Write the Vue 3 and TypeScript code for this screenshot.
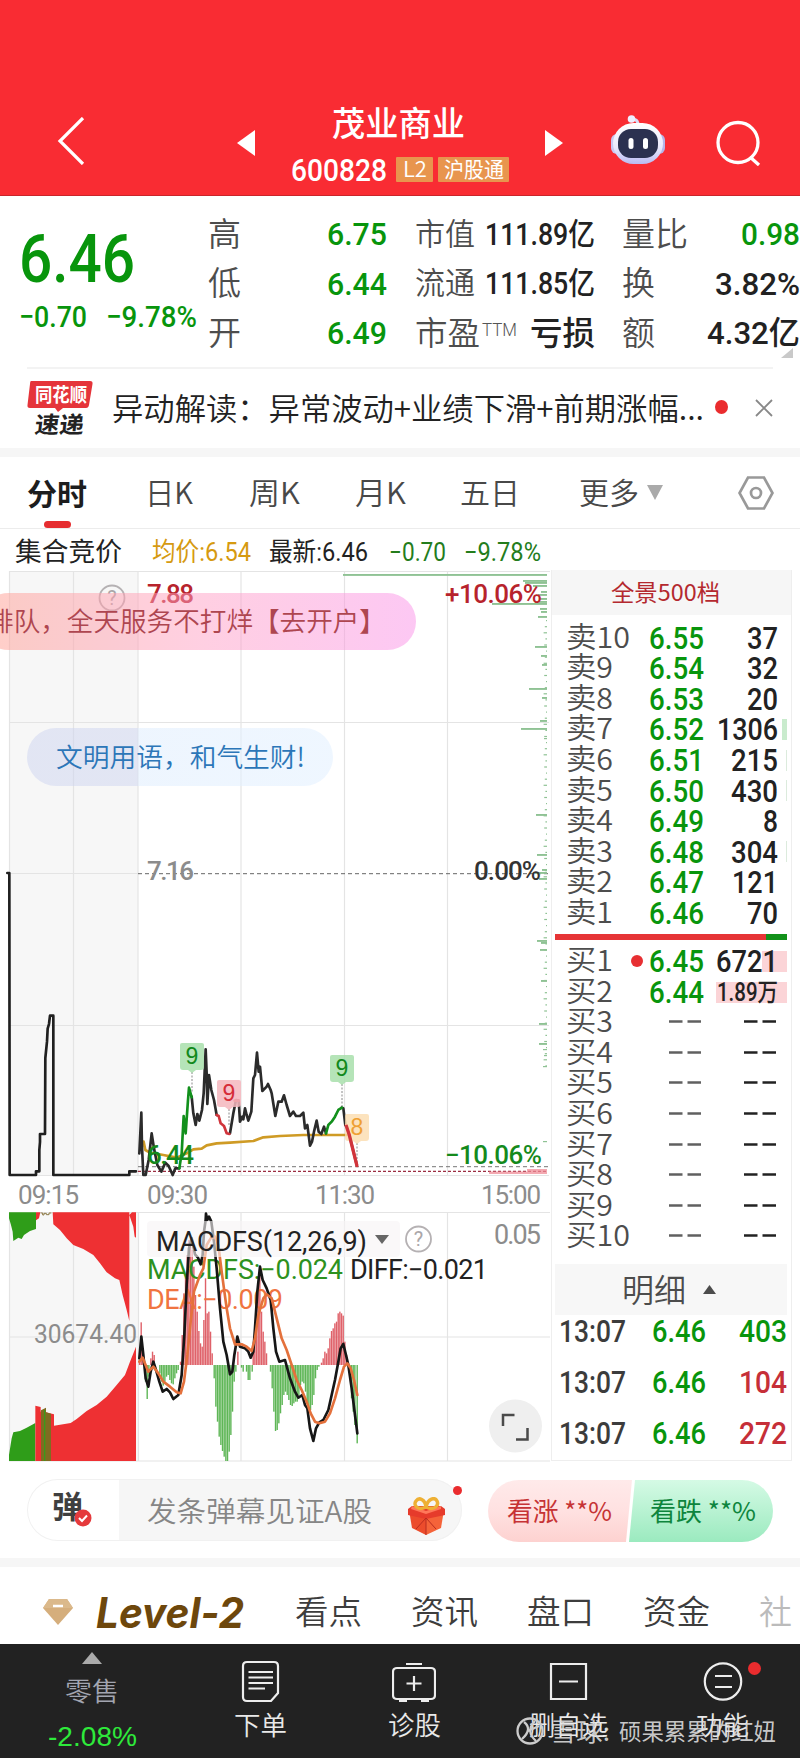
<script setup lang="ts">
import { h, type FunctionalComponent } from 'vue'

// Single line of text fitted to a fixed advance width.
const Fit: FunctionalComponent<{ t: string; w: number; s: number }> = (p) =>
  h('svg', { width: p.w, height: p.s, viewBox: `0 0 ${p.w} ${p.s}`, overflow: 'visible' }, [
    h('text', { x: 0, y: p.s * 0.87, 'font-size': p.s, textLength: p.w, lengthAdjust: 'spacingAndGlyphs' }, p.t),
  ])

interface Level { label: string; price: string; qty: string; w: number; bar: number }
const lv = (label: string, price: string, qty: string, w: number, bar = 0): Level => ({ label, price, qty, w, bar })
const asks: Level[] = [
  lv('卖10', '6.55', '37', 31), lv('卖9', '6.54', '32', 31), lv('卖8', '6.53', '20', 31),
  lv('卖7', '6.52', '1306', 61, 5), lv('卖6', '6.51', '215', 47, 1), lv('卖5', '6.50', '430', 47, 1),
  lv('卖4', '6.49', '8', 15), lv('卖3', '6.48', '304', 47, 1), lv('卖2', '6.47', '121', 46), lv('卖1', '6.46', '70', 31),
]
const bids: Level[] = [
  lv('买1', '6.45', '6721', 62, 25), lv('买2', '6.44', '1.89万', 61, 71),
  ...[3, 4, 5, 6, 7, 8, 9, 10].map((n) => lv('买' + n, '', '', 0)),
]
const trades = [
  { q: '403', c: 'green' }, { q: '104', c: 'red' }, { q: '272', c: 'red' },
]
const tabs = [
  { t: '日K', w: 48, c: 't1' }, { t: '周K', w: 51, c: 't2' }, { t: '月K', w: 51, c: 't3' }, { t: '五日', w: 60, c: 't4' }, { t: '更多', w: 60, c: 't5' },
]

const labelWidth = (l: string) => (l.length > 2 ? 64 : 47)

// Volume-by-price strip: [y, length]
const strip: number[][] = [
  [574, 204], [580, 24], [582, 22], [585, 14], [591, 6], [594, 9], [598, 8], [601, 8], [603, 55], [608, 7], [611, 6], [616, 9],
  [646, 12], [655, 6], [664, 5], [688, 18], [697, 5], [720, 7], [728, 26], [738, 3], [814, 11], [854, 10], [869, 5], [872, 12], [878, 8],
  [940, 10], [942, 6], [949, 7], [980, 6], [1023, 8], [1043, 8], [1049, 4], [1055, 3], [1066, 4], [1141, 4],
]
for (let i = 0; i < 74; i++) strip.push([620 + i * 6.1, 1 + ((i * 7) % 5) * 0.6])

const parse = (s: string) => s.split(' ').map((p) => p.split(',').map(Number))
// MACD histogram tips, three units per pixel, baseline at 510
const histogram = parse(
  '419,495 424,382 429,480 437,560 442,612 447,545 453,490 458,470 463,480 480,535 485,560 490,572 495,560 500,545 505,540 510,555 515,565 520,568 525,550 530,535 535,525 ' +
  '542,500 547,420 552,295 557,240 562,180 567,135 572,125 577,165 582,215 587,300 592,350 597,408 602,445 607,455 612,375 617,250 622,355 627,350 632,410 637,475 ' +
  '643,550 648,635 653,680 658,725 663,750 668,768 673,785 678,798 683,798 688,770 693,720 698,650 703,560 708,530 714,470 725,518 730,530 740,530 745,555 750,555 757,530 ' +
  '760,460 765,400 770,340 775,290 780,230 785,350 790,410 795,440 800,475 812,530 817,580 822,650 827,708 832,705 837,685 842,655 847,630 852,600 857,590 862,600 867,615 872,630 877,633 882,625 887,620 892,620 ' +
  '897,600 902,570 907,560 912,565 917,590 922,625 927,640 932,645 937,630 942,600 947,550 952,525 957,515 965,503 970,490 975,470 980,475 985,460 990,430 995,408 1000,400 1005,385 1010,380 1015,355 1020,350 1025,355 1030,362 1035,440 1040,480 1045,500 ' +
  '1050,550 1055,610 1060,650 1065,690 1072,745',
)
const markers = [
  { x: 192, y: 1043, t: '9', c: 'mg', end: 1092 },
  { x: 229, y: 1080, t: '9', c: 'mr', end: 1126 },
  { x: 342, y: 1055, t: '9', c: 'mg', end: 1106 },
  { x: 357, y: 1114, t: '8', c: 'mo', end: 1164 },
]
</script>

<template>
  <div class="page">
    <header class="top">
      <svg class="back" width="28" height="48" viewBox="0 0 28 48"><path d="M26 1 3 24 26 47" /></svg>
      <svg class="prev" width="18" height="26" viewBox="0 0 18 26"><path d="M18 0V26L0 13z" /></svg>
      <div class="title">
        <Fit class="cjk med" t="茂业商业" :w="133" :s="34" />
        <div class="code">
          <Fit class="num" t="600828" :w="96" :s="32" />
          <span class="badge b1"><Fit class="cjk light" t="L2" :w="24" :s="22" /></span>
          <span class="badge b2"><Fit class="cjk" t="沪股通" :w="60" :s="21" /></span>
        </div>
      </div>
      <svg class="next" width="18" height="26" viewBox="0 0 18 26"><path d="M0 0V26L18 13z" /></svg>
      <svg class="robot" width="54" height="50" viewBox="0 0 54 50">
        <defs><linearGradient id="rb" x1="0" y1="0" x2="0" y2="1"><stop offset="0" stop-color="#fff" /><stop offset=".6" stop-color="#e9e9fc" /><stop offset="1" stop-color="#b9baf1" /></linearGradient></defs>
        <path d="M27 12Q28 4 21 4" stroke="#dcdcf7" stroke-width="3" fill="none" /><circle cx="20.500" cy="4" r="3.800" fill="#eeefff" />
        <rect x="0" y="19" width="12" height="20" rx="6" fill="#c9c8f2" /><rect x="42" y="19" width="12" height="20" rx="6" fill="#b5b4e8" />
        <rect x="2" y="8" width="50" height="41" rx="20.500" fill="url(#rb)" />
        <rect x="7" y="14" width="40" height="29" rx="13" fill="#2b3150" />
        <rect x="17.500" y="23" width="5" height="11" rx="2.500" fill="#fff" /><rect x="32" y="23" width="5" height="11" rx="2.500" fill="#fff" />
      </svg>
      <svg class="search" width="46" height="46" viewBox="0 0 46 46"><circle cx="22" cy="22.500" r="20" /><path d="M34 37 43 45" /></svg>
    </header>

    <section class="quote">
      <div class="price green">
        <Fit class="num" t="6.46" :w="116" :s="66" />
        <div class="chg"><Fit class="num" t="−0.70" :w="68" :s="30" /><Fit class="num" t="−9.78%" :w="91" :s="30" /></div>
      </div>
      <div class="stats">
        <Fit class="cjk light lab" t="高" :w="33" :s="33" /><Fit class="num green end" t="6.75" :w="60" :s="32" />
        <Fit class="cjk light lab" t="市值" :w="60" :s="31" /><span class="val"><Fit class="num" t="111.89亿" :w="110" :s="31" /></span>
        <Fit class="cjk light lab" t="量比" :w="66" :s="33" /><Fit class="num green end" t="0.98" :w="59" :s="32" />
        <Fit class="cjk light lab" t="低" :w="33" :s="33" /><Fit class="num green end" t="6.44" :w="60" :s="32" />
        <Fit class="cjk light lab" t="流通" :w="60" :s="31" /><span class="val"><Fit class="num" t="111.85亿" :w="110" :s="31" /></span>
        <Fit class="cjk light lab" t="换" :w="33" :s="33" /><Fit class="num end" t="3.82%" :w="85" :s="32" />
        <Fit class="cjk light lab" t="开" :w="33" :s="33" /><Fit class="num green end" t="6.49" :w="60" :s="32" />
        <span class="pe"><Fit class="cjk light lab" t="市盈" :w="65" :s="33" /><Fit class="ttm" t="TTM" :w="35" :s="18" /></span><span class="val"><Fit class="cjk med" t="亏损" :w="65" :s="33" /></span>
        <Fit class="cjk light lab" t="额" :w="33" :s="33" /><Fit class="num end" t="4.32亿" :w="93" :s="32" />
      </div>
      <i class="corner"></i>
    </section>

    <section class="news">
      <div class="logo">
        <svg class="bubble" width="66" height="33" viewBox="0 0 66 33"><path d="M4 1H63Q66 1 65.500 4L62 25Q61.500 28 59 28H36L31 32 28 28H3Q0 28 .5 25L3 4Q3 1 4 1z" fill="#e5343a" /><text x="8" y="22" textLength="52" lengthAdjust="spacingAndGlyphs">同花顺</text></svg>
        <Fit class="cjk bold" t="速递" :w="49" :s="23" />
      </div>
      <Fit class="cjk light headline" t="异动解读：异常波动+业绩下滑+前期涨幅..." :w="592" :s="31" />
      <i class="dot"></i>
      <svg class="close" width="18" height="18" viewBox="0 0 18 18"><path d="M1 1 17 17M17 1 1 17" /></svg>
    </section>
    <div class="band"></div>

    <nav class="tabs">
      <span class="active"><Fit class="cjk bold" t="分时" :w="60" :s="30" /><i></i></span>
      <Fit v-for="t in tabs" :key="t.t" class="cjk light" :class="t.c" :t="t.t" :w="t.w" :s="30" />
      <svg class="more" width="16" height="15" viewBox="0 0 16 15"><path d="M0 0H16L8 15z" /></svg>
      <svg class="hex" width="36" height="34" viewBox="0 0 36 34"><path d="M10 1.500H26L34.500 17 26 32.500H10L1.500 17z" /><circle cx="18" cy="17" r="5" /></svg>
    </nav>

    <div class="infoline">
      <Fit class="cjk" t="集合竞价" :w="107" :s="26" />
      <Fit class="num norm gold" t="均价:6.54" :w="99" :s="26" />
      <Fit class="num norm" t="最新:6.46" :w="99" :s="26" />
      <Fit class="num norm dgreen" t="−0.70" :w="57" :s="26" />
      <Fit class="num norm dgreen" t="−9.78%" :w="77" :s="26" />
    </div>

    <main class="market">
      <div class="chart">
        <svg class="plot" width="550" height="892" viewBox="0 570 550 892">
          <rect x="9" y="571" width="129" height="604" fill="#f7f7f7" />
          <rect x="9" y="1212" width="129" height="249" fill="#f7f7f7" />
          <path class="grid" d="M9 571.500H551M9 722.500H549M9 873.500H138M9 1025.500H549M9 1175.500H549M9.500 571V1175M73.500 571V1175M138 571V1175M241 571V1175M344.500 571V1175M447.500 571V1175M9 1212.500H551M9 1337H551M9 1461H551M9.500 1212V1461M73.500 1212V1461M138.500 1212V1461M241 1212V1461M344.500 1212V1461M447.500 1212V1461" />
          <path d="M138 873.700H548" stroke="#666" stroke-width="1" stroke-dasharray="4 3" />
          <path d="M138 1166.700H548" stroke="#777" stroke-width="1" stroke-dasharray="4 3" />
          <path d="M138 1171.300H548" stroke="#9d2e42" stroke-width="1.200" stroke-dasharray="3 2" />
          <rect v-for="(b, i) in strip" :key="i" :x="547 - b[1]" :y="b[0]" :width="b[1]" :height="b[1] > 4 ? 1.9 : 1.2" fill="#8fc294" />
          <path d="M489 1171.500H527V1169H547V1174H489z" fill="#ef8c97" opacity=".75" />

          <g class="line" transform="translate(0 860) scale(.33333)">
            <path d="M22 39H28L29 945H108V934H118V870L120 846V822H135L136 594 141 545 143 506 147 492 150 467H160V945H388V934H408" stroke="#202020" />
            <path d="M431 845 436 870 450 878 490 885 530 893 560 880 580 868 605 866 620 856 650 850 690 848 760 843 790 832 840 828 910 825 1048 825" stroke="#cf9b25" stroke-width="6" />
            <path d="M418 880 424 758 426 860 430 945 437 945 446 900 455 820 462 865 472 915 484 935 496 908 506 918 518 945 526 925 538 925M575 710 580 760 587 795 592 762 598 782 606 750 611 700 617 568 620 640 622 732 627 645 634 690 642 720 650 765M690 820 700 760 708 720 716 722 720 785 727 770 730 778 735 745 740 765 745 782 754 755 760 655 765 645 771 578 776 635 780 620 787 693 800 680 804 672 812 690 815 700 826 768 835 725 845 725 852 706 860 735 870 768 880 755 888 768 900 768 910 758 915 805 922 795 930 857 936 845 942 815 950 782 956 815 964 822 972 800 978 820M1025 743 1030 745 1036 795" stroke="#2b2b2b" />
            <path d="M538 925 545 880 551 768 557 820 564 720 567 683 575 712M978 820 985 795 995 785 1005 770 1015 750 1026 743" stroke="#12901c" />
            <path d="M650 765 656 768 662 790 672 798 680 820 688 822M704 722H716M1038 795 1048 825 1071 918" stroke="#d0343b" />
          </g>

          <g v-for="(m, i) in markers" :key="i" :class="m.c">
            <path :d="`M${m.x} ${m.y + 29}V${m.end}`" stroke="#888" stroke-dasharray="2 1.500" />
            <path :d="`M${m.x - 12} ${m.y + 2}q0-2 2-2h20q2 0 2 2v22q0 3-3 3h-5l-4 3-4-3h-5q-3 0-3-3z`" class="flag" />
            <text :x="m.x" :y="m.y + 21" text-anchor="middle" class="sans" font-size="23">{{ m.t }}</text>
          </g>
          <path d="M346 1125 349.300 1135 357 1166" stroke="#d0343b" stroke-width="3.300" fill="none" />

          <g class="n26">
            <text x="147" y="603" textLength="47" fill="#b7232c">7.88</text>
            <text x="445" y="603" textLength="97" fill="#b7232c">+10.06%</text>
            <text x="147" y="880" textLength="47" fill="#8c8c8c">7.16</text>
            <text x="474" y="880" textLength="67" fill="#333">0.00%</text>
            <text x="147" y="1164" textLength="47" fill="#148a1c">6.44</text>
            <text x="445" y="1163.500" textLength="97" fill="#148a1c">−10.06%</text>
          </g>
          <g class="n26 gray">
            <text x="18" y="1204" textLength="61">09:15</text><text x="147" y="1204" textLength="61">09:30</text>
            <text x="315" y="1204" textLength="60">11:30</text><text x="481" y="1204" textLength="60">15:00</text>
          </g>
          <g class="help"><circle cx="112" cy="598" r="12.500" /><text x="112" y="605" text-anchor="middle" font-size="20">?</text></g>

          <g transform="translate(0 1195) scale(.33333)">
            <path d="M27 52H108V102L90 108 72 120 65 132 55 128 40 138 38 110 33 90 27 70zM27 798V780L35 730 40 712 60 708 80 698 106 684V798z" fill="#2f9d19" />
            <path d="M108 52H121L117 70 108 76zM158 52H388V378L380 345 368 300 358 255 345 250 320 232 300 205 280 180 250 162 220 150 200 130 180 105 160 88zM388 60 396 52H408V128L404 125 400 95zM408 455V798H106V632L122 636V650L138 640V652L162 658V692L212 684 230 672 260 648 290 630 320 605 350 570 375 540 390 500z" fill="#ee3033" />
            <path d="M123 646 138 638V652L153 656V798H123z" fill="#7f6c21" /><path d="M122 54h6v6h4v-5h7v4h8v-5h7" stroke="#8c7844" stroke-width="3" fill="none" />
            <path d="M134 645V798" stroke="#3c981b" stroke-width="4" />
          </g>
          <text class="n26v" x="34" y="1343" textLength="103" lengthAdjust="spacingAndGlyphs">30674.40</text>

          <g transform="translate(0 1195) scale(.33333)">
            <rect v-for="(b, i) in histogram" :key="i" :x="b[0] - 2.500" :y="Math.min(b[1], 510)" width="4.200" :height="Math.abs(510 - b[1])" :fill="b[1] < 510 ? '#db5059' : '#4cae44'" opacity=".9" />
          </g>
          <g class="macd">
            <text x="147" y="1278.500" textLength="196" fill="#2d9120">MACDFS:−0.024</text>
            <text x="350" y="1278.500" textLength="138" fill="#222">DIFF:−0.021</text>
            <text x="147" y="1309" textLength="136" fill="#f07440">DEA:−0.009</text>
            <text x="494" y="1244" textLength="47" fill="#8c8c8c">0.05</text>
          </g>
          <g class="line" transform="translate(0 1195) scale(.33333)">
            <path d="M418 490 424 425 430 480 437 550 445 575 452 530 460 500 468 525 478 560 488 590 500 582 510 592 520 612 535 600 545 540 553 420 560 270 567 160 575 130 585 178 594 188 602 208 608 180 612 110 617 75 618 56 622 75 627 65 634 80 642 140 650 220 660 340 670 440 680 480 690 538 697 530 703 480 712 425 720 455 735 460 745 470 752 488 760 470 765 400 772 290 780 215 788 255 800 280 812 315 820 400 828 470 838 500 855 495 870 550 885 590 895 608 907 600 915 630 922 640 930 700 940 738 948 700 958 682 970 675 985 645 995 600 1005 555 1015 500 1022 460 1030 447 1038 480 1045 510 1055 580 1065 660 1072 715" stroke="#161616" stroke-width="6.500" />
            <path d="M418 500 428 488 445 530 460 515 475 535 490 560 510 575 530 592 542 595 552 560 562 480 572 380 582 290 600 240 610 220 620 150 632 130 645 125 655 150 665 230 680 340 690 400 705 448 725 448 740 455 755 468 765 430 775 360 790 310 800 298 815 310 830 370 845 430 860 465 875 510 890 555 905 585 920 620 932 655 945 680 958 685 975 680 990 655 1005 610 1020 555 1032 515 1042 505 1052 520 1062 555 1072 600" stroke="#e4713c" stroke-width="6" />
          </g>
          <rect x="147" y="1221" width="253" height="36" rx="4" fill="#f7f4f6" opacity=".62" />
          <g class="macd"><text x="156" y="1250.500" textLength="211" fill="#222">MACDFS(12,26,9)</text></g>
          <path d="M375 1235H389L382 1244z" fill="#666" />
          <g class="help"><circle cx="418.500" cy="1239" r="12.500" /><text x="418.500" y="1246" text-anchor="middle" font-size="20">?</text></g>
          <circle cx="515.500" cy="1426" r="26.500" fill="#efefef" />
          <path d="M503 1426V1415H514.500M527.500 1428V1439.500H516" fill="none" stroke="#4a4a4a" stroke-width="2.500" />
        </svg>
        <div class="pill pink"><Fit class="cjk light" t="排队，全天服务不打烊【去开户】" :w="399" :s="26.6" /></div>
        <div class="pill blue"><Fit class="cjk light" t="文明用语，和气生财!" :w="249" :s="26.6" /></div>
      </div>

      <aside class="book">
        <div class="bookhead"><Fit class="cjk" t="全景500档" :w="109" :s="23" /></div>
        <div class="levels asks">
          <div v-for="r in asks" :key="r.label" class="level">
            <Fit class="cjk light lab" :t="r.label" :w="labelWidth(r.label)" :s="29" />
            <Fit class="num green" :t="r.price" :w="55" :s="31" />
            <Fit class="num qty" :t="r.qty" :w="r.w" :s="31" />
            <i class="vol" :class="{ thin: r.bar === 1 }" :style="{ width: r.bar + 'px' }"></i>
          </div>
        </div>
        <div class="ratio"><i></i></div>
        <div class="levels bids">
          <div v-for="(r, i) in bids" :key="r.label" class="level">
            <Fit class="cjk light lab" :t="r.label" :w="labelWidth(r.label)" :s="29" />
            <template v-if="r.price">
              <Fit class="num green" :t="r.price" :w="55" :s="31" />
              <Fit class="num qty" :t="r.qty" :w="r.w" :s="i ? 25 : 31" />
            </template>
            <template v-else>
              <svg class="dash" width="32" height="3" viewBox="0 0 32 3"><path d="M0 1.500H13.500M18.500 1.500H32" /></svg>
              <svg class="dash dark" width="32" height="3" viewBox="0 0 32 3"><path d="M0 1.500H13.500M18.500 1.500H32" /></svg>
            </template>
            <i class="vol" :style="{ width: r.bar + 'px' }"></i>
            <i v-if="i === 0" class="mark"></i>
          </div>
        </div>
        <div class="detail"><Fit class="cjk light" t="明细" :w="64" :s="32" /><svg width="13" height="9" viewBox="0 0 13 9"><path d="M0 9H13L6.500 0z" /></svg></div>
        <div v-for="t in trades" :key="t.q" class="trade">
          <Fit class="num time" t="13:07" :w="67" :s="31" /><Fit class="num green" t="6.46" :w="54" :s="31" /><Fit class="num end" :class="t.c" :t="t.q" :w="48" :s="31" />
        </div>
      </aside>
    </main>

    <section class="chat">
      <div class="input">
        <div class="tan"><Fit class="cjk bold" t="弹" :w="31" :s="31" /><svg width="18" height="18" viewBox="0 0 18 18"><circle cx="9" cy="9" r="8.500" fill="#e53a3c" /><path d="M5 9 8 12 13 6.500" stroke="#fff" stroke-width="2" fill="none" /></svg></div>
        <Fit class="cjk light ph" t="发条弹幕见证A股" :w="225" :s="28" />
        <svg class="gift" width="37" height="39" viewBox="0 0 37 39">
          <path d="M1 13 18 16V38L4 31z" fill="#ec4c2c" /><path d="M36 13 18 16V38L33 31z" fill="#f56339" /><path d="M0 12 4 9H33L37 12V18L18 22 0 18z" fill="#e63b2b" /><path d="M4 9 18 14 33 9V12L18 17 3 12z" fill="#ff785a" />
          <path d="M18 21 8 32M18 21 28 32M18 21V38" stroke="#b92c20" fill="none" />
          <path d="M18 10C9 14 5 8 8 4S17 2 18 10C20 1 27 0 29 4S27 14 18 10z" fill="none" stroke="#eeb034" stroke-width="3.500" />
        </svg>
        <i class="dot small"></i>
      </div>
      <div class="vote">
        <svg width="285" height="62" viewBox="0 0 285 62">
          <defs><linearGradient id="up" x1="0" y1="0" x2="0" y2="1"><stop offset="0" stop-color="#ffeaea" /><stop offset=".5" stop-color="#ffe1e1" /><stop offset="1" stop-color="#fdd2d0" /></linearGradient><linearGradient id="dn" x1="0" y1="0" x2="0" y2="1"><stop offset="0" stop-color="#d5fae5" /><stop offset="1" stop-color="#9beabf" /></linearGradient></defs>
          <path d="M31 0H144L138 62H31A31 31 0 0 1 31 0z" fill="url(#up)" /><path d="M147 0H254A31 31 0 0 1 254 62H141z" fill="url(#dn)" />
        </svg>
        <div class="votes"><Fit class="cjk up" t="看涨 **%" :w="105" :s="26" /><Fit class="cjk down" t="看跌 **%" :w="106" :s="26" /></div>
      </div>
    </section>
    <div class="band"></div>

    <nav class="topics">
      <svg width="30" height="26" viewBox="0 0 30 26"><path d="M6 0H24L30 9 15 26 0 9z" fill="#d5ae7c" /><path d="M0 9 6 0H24L30 9z" fill="#dbb98b" /><path d="M10 7H20" stroke="#fff" stroke-width="2.500" /></svg>
      <Fit class="level2" t="Level-2" :w="148" :s="42" />
      <Fit class="cjk light k1" t="看点" :w="67" :s="33" /><Fit class="cjk light k2" t="资讯" :w="67" :s="33" /><Fit class="cjk light k2" t="盘口" :w="67" :s="33" /><Fit class="cjk light k2" t="资金" :w="67" :s="33" /><Fit class="cjk light k2 faded" t="社" :w="33" :s="33" />
    </nav>

    <footer class="bottom">
      <div class="item index">
        <svg width="20" height="12" viewBox="0 0 20 12"><path d="M0 12H20L10 0z" fill="#aaa" /></svg>
        <Fit class="cjk light sector" t="零售" :w="54" :s="26" /><Fit class="sans drop" t="-2.08%" :w="89" :s="28" />
      </div>
      <div class="item"><svg width="44" height="44" viewBox="0 0 44 44"><path d="M8 3H35Q39 3 39 7V34L32 42H8Q4 42 4 38V7Q4 3 8 3zM9.500 13H34M9.500 18.500H34M9.500 24H34M9.500 29.500H26" /></svg><Fit class="cjk light" t="下单" :w="53" :s="26" /></div>
      <div class="item"><svg width="44" height="44" viewBox="0 0 44 44"><path d="M5 9H39Q43 9 43 13V36Q43 40 39 40H5Q1 40 1 36V13Q1 9 5 9zM14 5H30M22 17V32M14.500 24.500H29.500M7 42H15M29 42H37" /></svg><Fit class="cjk light" t="诊股" :w="53" :s="26" /></div>
      <div class="item"><svg width="44" height="44" viewBox="0 0 44 44"><path d="M5 5H40V40H5zM13 22.500H32" /></svg><Fit class="cjk light" t="删自选" :w="79" :s="26" /></div>
      <div class="item"><svg width="44" height="44" viewBox="0 0 44 44"><circle cx="22" cy="22.500" r="18.200" /><path d="M14 17H31M14 28H31" /></svg><Fit class="cjk light" t="功能" :w="53" :s="26" /><i class="dot nb"></i></div>
      <div class="watermark">
        <svg width="28" height="28" viewBox="0 0 28 28"><circle cx="14" cy="14" r="12.500" /><path d="M8 5Q17 12 6 22M19 4Q9 14 20 24M12 14 23 9" /></svg>
        <Fit class="cjk mark1" t="雪球:" :w="60" :s="25" /><Fit class="cjk" t="硕果累累的红妞" :w="157" :s="23" />
      </div>
    </footer>
  </div>
</template>

<style>
html, body { margin: 0; background: #fff; }
</style>

<style scoped>
.page { width: 800px; height: 1758px; overflow: hidden; background: #fff; color: #222; display: flex; flex-direction: column; font-family: Roboto, "Noto Sans CJK SC", sans-serif; }
svg { display: block; flex: none; fill: currentColor; }
.cjk { font-family: "Noto Sans CJK SC", sans-serif; font-weight: 400; }
.light { font-weight: 350; }
.med { font-weight: 500; }
.bold { font-weight: 700; }
.num { font-family: Roboto, "Noto Sans CJK SC", sans-serif; font-weight: 460; }
.norm { font-weight: 400; }
.sans { font-family: "Liberation Sans", sans-serif; }
.green { color: #08950c; }
.dgreen { color: #247d1c; }
.red { color: #c62f38; }
.gold { color: #d69a10; }
.lab { color: #4d4d4d; }
.end { justify-self: end; }

.top { height: 196px; box-sizing: border-box; background: #f92c33; border-bottom: 1px solid #c9252b; color: #fff; display: flex; align-items: flex-start; flex: none; }
.back { margin: 117px 0 0 57px; fill: none; stroke: #fff; stroke-width: 3.200; }
.prev { margin: 130px 0 0 152px; }
.title { width: 218px; margin: 106px 0 0 36px; display: flex; flex-direction: column; gap: 13px; }
.title > svg { margin-left: 41px; }
.code { display: flex; align-items: center; }
.badge { height: 25px; background: #e8954e; display: flex; align-items: center; justify-content: center; border-radius: 1px; }
.b1 { width: 37px; margin-left: 9px; }
.b2 { width: 71px; margin-left: 5px; }
.next { margin: 130px 0 0 36px; }
.robot { margin: 115px 0 0 48px; }
.search { margin: 120px 0 0 51px; fill: none; stroke: #fff; stroke-width: 3.300; }

.quote { height: 171px; flex: none; display: flex; position: relative; }
.price { width: 188px; padding: 29px 0 0 19px; }
.chg { display: flex; gap: 19px; margin-top: 10px; }
.stats { display: grid; width: 593px; height: 148px; margin: 12.500px 0 0 1px; grid-template-columns: 33px 146px 93px 115px 90px 115px; grid-template-rows: 49.500px 49.500px 49.500px; align-items: center; }
.stats > :nth-child(6n + 3) { margin-left: 28px; }
.stats > :nth-child(6n + 5) { margin-left: 27px; }
.val { justify-self: end; }
.pe { display: flex; gap: 2px; }
.ttm { color: #555; font-weight: 300; margin-top: 4px; }
.corner { position: absolute; left: 781px; top: 152px; border-left: 12px solid transparent; border-bottom: 10px solid #c9c9c9; }

.news { height: 81px; flex: none; margin: 0 27px; box-sizing: border-box; border-top: 2px solid #f3f3f3; display: flex; align-items: flex-start; }
.logo { width: 66px; padding-top: 11px; }
.logo > :last-child { margin: 0 0 0 8px; transform: skewX(-7deg); }
.bubble text { font: 700 19px "Noto Sans CJK SC", sans-serif; fill: #fff; }
.headline { margin: 24px 0 0 19px; color: #222; }
.dot { width: 14px; height: 14px; border-radius: 50%; background: #ea2c2e; }
.news .dot { margin: 31px 0 0 11px; }
.close { margin: 30px 0 0 27px; stroke: #888; stroke-width: 1.800; }
.band { height: 9px; background: #f6f6f6; flex: none; }

.tabs { height: 72px; flex: none; box-sizing: border-box; border-bottom: 1px solid #ececec; display: flex; align-items: center; color: #484848; }
.active { margin-left: 27px; color: #1d1d1d; align-self: stretch; display: flex; flex-direction: column; align-items: center; padding-top: 22px; box-sizing: border-box; }
.active i { width: 27px; height: 7px; border-radius: 4px; background: #e62d30; margin-top: 12px; }
.t1 { margin-left: 58px; } .t2 { margin-left: 56px; } .t3 { margin-left: 55px; } .t4 { margin-left: 54px; } .t5 { margin-left: 59px; }
.more { margin-left: 8px; color: #aaa; }
.hex { margin-left: 75px; fill: none; stroke: #999; stroke-width: 2.700; }
.infoline { height: 41px; flex: none; box-sizing: border-box; padding: 2px 0 0 15px; display: flex; align-items: center; }
.infoline > :nth-child(2) { margin-left: 30px; }
.infoline > :nth-child(3) { margin-left: 18px; }
.infoline > :nth-child(4) { margin-left: 21px; }
.infoline > :nth-child(5) { margin-left: 18px; }

.market { height: 892px; flex: none; display: flex; }
.chart { width: 551px; position: relative; flex: none; overflow: hidden; }
.grid { stroke: #e4e4e4; stroke-width: 1.200; fill: none; }
.line path { fill: none; stroke-width: 8; stroke-linejoin: round; stroke-linecap: round; }
.n26 text { font: 460 26px Roboto, sans-serif; }
.n26.gray { fill: #8c8c8c; }
.n26.gray text { font-weight: 400; }
.n26v { font: 400 26px Roboto, sans-serif; fill: #8c8c8c; }
.macd text { font: 400 27px Roboto, sans-serif; }
.help circle { fill: none; stroke: #b5b1b3; stroke-width: 1.800; }
.help text { fill: #aaa6a8; }
.mg { fill: #12891c; } .mg .flag { fill: #a8dfab; opacity: .85; }
.mr { fill: #d52c37; } .mr .flag { fill: #f5b6bd; opacity: .85; }
.mo { fill: #efa033; } .mo .flag { fill: #fbdcae; opacity: .8; }
.pill { position: absolute; display: flex; align-items: center; box-sizing: border-box; }
.pink { left: -20px; top: 23px; width: 436px; height: 57px; padding-left: 7px; border-radius: 29px; background: linear-gradient(90deg, rgba(255, 166, 152, .55), rgba(255, 160, 196, .5) 50%, rgba(250, 145, 232, .5)); color: #ae4650; }
.blue { left: 27px; top: 158px; width: 306px; height: 58px; padding-left: 29px; border-radius: 29px; background: linear-gradient(90deg, rgba(205, 212, 240, .5), rgba(205, 212, 240, .5) 36%, rgba(226, 239, 254, .6) 36.500%, rgba(228, 241, 255, .6)); color: #2c76b8; }

.book { width: 241px; height: 891px; box-sizing: border-box; border: 1px solid #eee; border-top: 0; flex: none; }
.bookhead { height: 45px; background: #f6f6f6; display: flex; align-items: center; padding-left: 59px; color: #b4292f; }
.levels { padding: 0 4px 0 14px; }
.asks { padding-top: 7.500px; }
.level { height: 30.560px; display: grid; grid-template-columns: 83px 55px 1fr; align-items: center; position: relative; }
.level > svg { margin-top: -1px; }
.qty { justify-self: end; margin-right: 9px; position: relative; z-index: 1; }
.vol { position: absolute; right: 0; top: 5px; height: 21px; background: #c9ebcd; }
.vol.thin { background: #dcebdd; }
.bids .vol { background: #fbd4d7; }
.ratio { height: 6px; margin: 6.500px 4px 5.500px 3px; background: #e63436; }
.ratio i { display: block; height: 6px; width: 21px; margin-left: auto; background: #12911a; }
.mark { position: absolute; left: 65px; top: 9px; width: 12px; height: 12px; border-radius: 50%; background: #e72f32; }
.dash { justify-self: end; margin-right: 3px; fill: none; stroke: #606060; stroke-width: 2.400; }
.dash.dark { margin-right: 11px; stroke: #222; }
.detail { margin: 13px 4px 0 3px; height: 51px; background: #f7f7f7; display: flex; align-items: center; gap: 17px; padding-left: 67px; color: #4c4c4c; }
.trade { height: 51px; display: grid; grid-template-columns: 93px 54px 1fr; padding: 0 4px 0 7px; align-items: start; box-sizing: border-box; }
.time { color: #3c3c3c; }

.chat { height: 96px; flex: none; display: flex; align-items: flex-start; padding: 17px 27px 0; box-sizing: border-box; }
.input { position: relative; width: 435px; height: 62px; border-radius: 32px; background: linear-gradient(90deg, #fff 92px, #f6f6f6 92px); box-shadow: inset 0 0 0 1px #f1f1f1; display: flex; align-items: center; margin-right: 26px; }
.tan { width: 92px; position: relative; color: #3f3f3f; box-sizing: border-box; padding-left: 25px; margin-top: -7px; }
.tan > :last-child { position: absolute; left: 47px; top: 18px; }
.ph { margin: 3px 0 0 28px; color: #868686; }
.gift { margin: 12px 0 0 36px; }
.dot.small { position: absolute; width: 9px; height: 9px; right: 0; top: 7px; }
.vote { position: relative; width: 285px; height: 62px; margin-top: 1px; }
.votes { position: absolute; inset: 0; display: flex; align-items: center; padding-left: 19px; gap: 38px; }
.up { color: #c63335; } .down { color: #0d853d; }

.topics { height: 77px; flex: none; display: flex; align-items: center; padding: 12px 0 0 43px; box-sizing: border-box; overflow: hidden; color: #3d3d3d; }
.level2 { font-family: Inter, sans-serif; font-weight: 650; font-style: italic; color: #6d470c; margin-left: 23px; }
.k1 { margin-left: 51px; } .k2 { margin-left: 49px; }
.faded { color: #bbb; }

.bottom { height: 114px; flex: none; background: #222; color: #e9e9e9; display: grid; grid-template-columns: 184px 153px 154px 154px 155px; position: relative; }
.item { display: flex; flex-direction: column; align-items: center; padding-top: 15px; gap: 9px; position: relative; }
.item > svg:first-child { fill: none; stroke: #ededed; stroke-width: 2.200; }
.index { padding-top: 8px; gap: 0; }
.index > svg:first-child { stroke: none; }
.sector { margin-top: 14px; color: #a2a5b0; }
.drop { margin-top: 18px; color: #2eea3b; }
.dot.nb { position: absolute; width: 13px; height: 13px; left: 103px; top: 18px; }
.watermark { position: absolute; left: 516px; top: 73px; display: flex; align-items: center; color: rgba(222, 222, 222, .9); }
.watermark > :first-child { fill: none; stroke: #ccc; stroke-width: 2.300; margin-right: 6px; }
.mark1 { margin-right: 9px; }
</style>
